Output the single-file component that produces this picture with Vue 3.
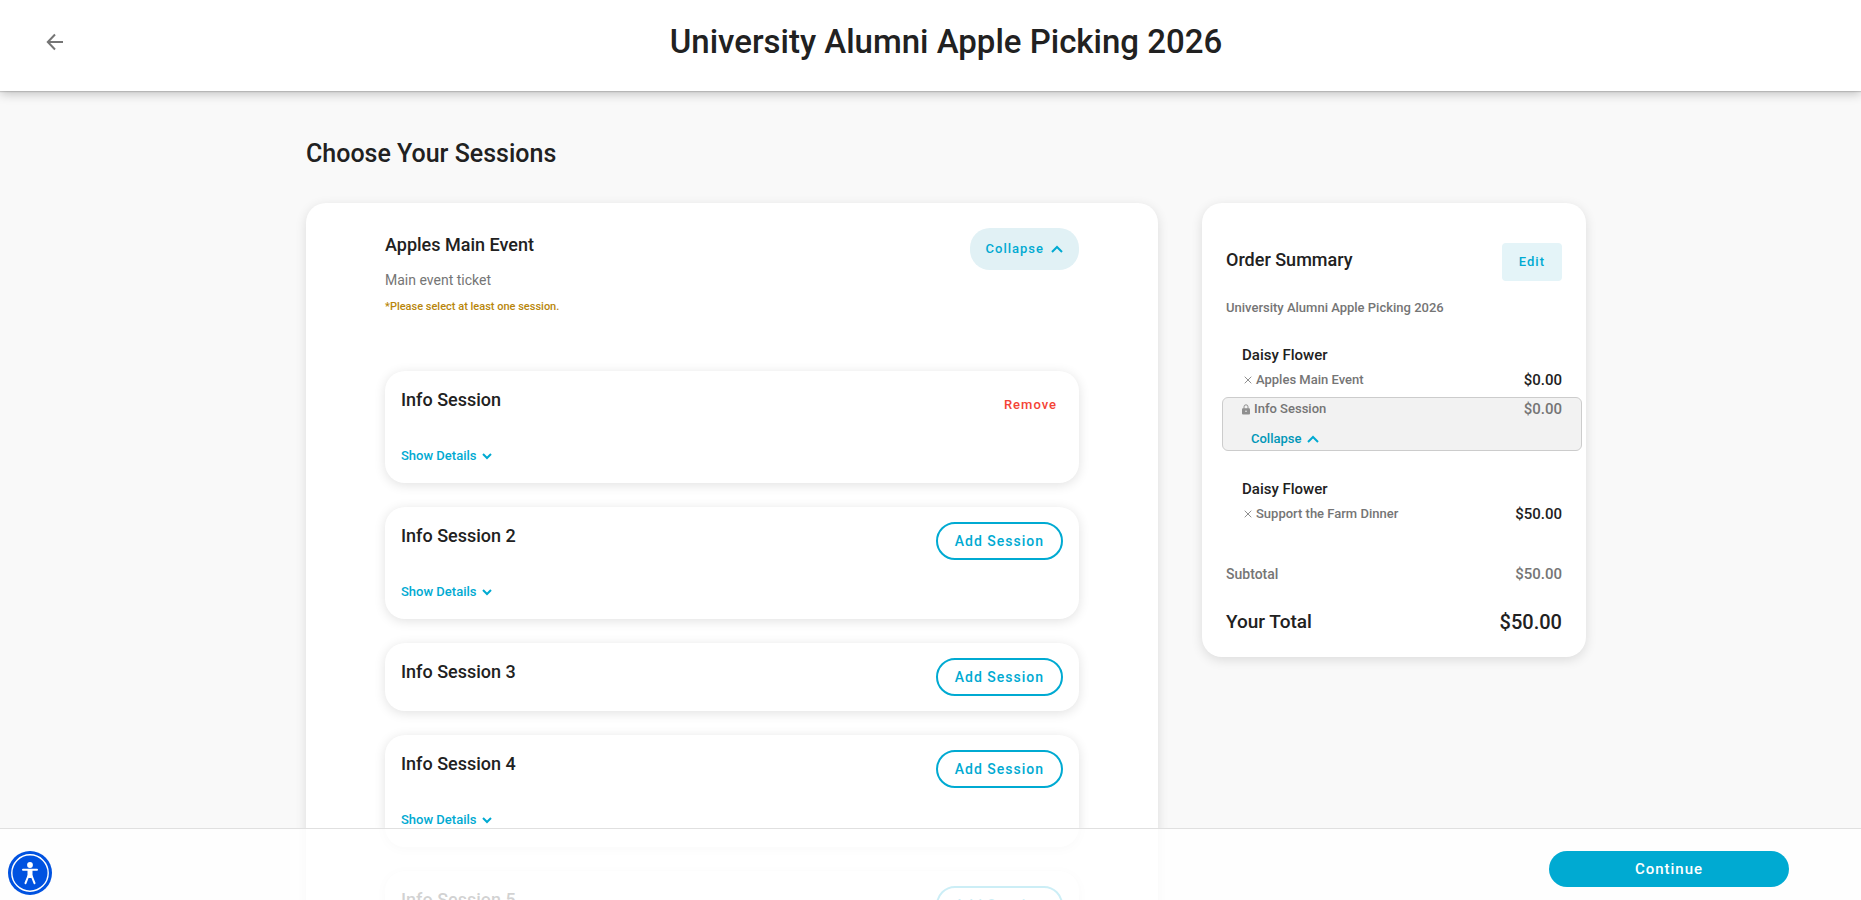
<script setup>
import { reactive } from 'vue'

const sessions = reactive([
  { id: 1, name: 'Info Session', details: true, added: true },
  { id: 2, name: 'Info Session 2', details: true, added: false },
  { id: 3, name: 'Info Session 3', details: false, added: false },
  { id: 4, name: 'Info Session 4', details: true, added: false },
  { id: 5, name: 'Info Session 5', details: true, added: false },
])
</script>

<template>
  <div class="page">
    <header class="topbar">
      <button class="back" type="button" aria-label="Back">
        <svg width="24" height="24" viewBox="0 0 24 24" aria-hidden="true">
          <path d="M20 12H5M12 4.5L4.8 12l7.2 7.5" fill="none" stroke="#757575" stroke-width="2" />
        </svg>
      </button>
      <h1>University Alumni Apple Picking 2026</h1>
    </header>

    <main class="content">
      <div class="container">
        <h2>Choose Your Sessions</h2>
        <div class="columns">
          <section class="card event">
            <div class="event-head">
              <div>
                <h3>Apples Main Event</h3>
                <p class="description">Main event ticket</p>
                <p class="notice">*Please select at least one session.</p>
              </div>
              <button class="collapse" type="button">
                Collapse
                <svg width="12" height="8" viewBox="0 0 12 8" aria-hidden="true">
                  <path d="M1 7l5-5 5 5" />
                </svg>
              </button>
            </div>

            <ul class="sessions">
              <li v-for="s in sessions" :key="s.id" class="session">
                <div class="session-head">
                  <h4>{{ s.name }}</h4>
                  <button v-if="s.added" class="remove" type="button" @click="s.added = false">Remove</button>
                  <button v-else class="add" type="button" @click="s.added = true">Add Session</button>
                </div>
                <button v-if="s.details" class="details" type="button">
                  Show Details
                  <svg width="10" height="8" viewBox="0 0 10 8" aria-hidden="true">
                    <path d="M1 2l4 4 4-4" />
                  </svg>
                </button>
              </li>
            </ul>
          </section>

          <aside class="card summary">
            <div class="summary-head">
              <h3>Order Summary</h3>
              <button class="edit" type="button">Edit</button>
            </div>
            <p class="event-name">University Alumni Apple Picking 2026</p>

            <div class="guest">
              <h4>Daisy Flower</h4>
              <div class="line">
                <button class="drop" type="button" aria-label="Remove Apples Main Event">
                  <svg width="8" height="8" viewBox="0 0 8 8" aria-hidden="true"><path d="M.7.7l6.6 6.6M7.3.7L.7 7.3" /></svg>
                </button>
                <span>Apples Main Event</span>
                <span class="price">$0.00</span>
              </div>
              <div class="locked">
                <div class="line">
                  <svg class="lock" width="8" height="11" viewBox="0 0 8 11" aria-hidden="true">
                    <path d="M2 5V2.800a2 2 0 0 1 4 0V5" fill="none" stroke="#8f8f8f" />
                    <rect y="4.200" width="8" height="6.200" rx="1" fill="#8f8f8f" />
                    <circle cx="4" cy="7.300" r=".8" fill="#f2f2f2" />
                  </svg>
                  <span>Info Session</span>
                  <span class="price">$0.00</span>
                </div>
                <button class="collapse-link" type="button">
                  Collapse
                  <svg width="12" height="8" viewBox="0 0 12 8" aria-hidden="true">
                    <path d="M1 7l5-5 5 5" />
                  </svg>
                </button>
              </div>
            </div>

            <div class="guest">
              <h4>Daisy Flower</h4>
              <div class="line">
                <button class="drop" type="button" aria-label="Remove Support the Farm Dinner">
                  <svg width="8" height="8" viewBox="0 0 8 8" aria-hidden="true"><path d="M.7.7l6.6 6.6M7.3.7L.7 7.3" /></svg>
                </button>
                <span>Support the Farm Dinner</span>
                <span class="price">$50.00</span>
              </div>
            </div>

            <div class="subtotal"><span>Subtotal</span><span class="amount">$50.00</span></div>
            <div class="total"><span>Your Total</span><span class="amount">$50.00</span></div>
          </aside>
        </div>
      </div>
    </main>

    <footer class="bottombar">
      <button class="a11y" type="button" aria-label="Accessibility menu">
        <svg width="44" height="44" viewBox="0 0 44 44" aria-hidden="true">
          <circle cx="22" cy="22" r="22" fill="#0052e0" />
          <circle cx="22" cy="22" r="18.200" fill="none" stroke="#fff" stroke-width="1.400" />
          <circle cx="22" cy="14" r="2.900" fill="#fff" />
          <path d="M15 18.800l14 0M20.300 25l-2.800 7.200M23.700 25l2.800 7.200" fill="none" stroke="#fff" stroke-width="2" stroke-linecap="round" />
          <path d="M19.500 18.500h5v7.500l-1 1h-3l-1-1z" fill="#fff" />
        </svg>
      </button>
      <button class="continue" type="button">Continue</button>
    </footer>
  </div>
</template>

<style>
body {
  margin: 0;
  background: #f9f9f9;
}
</style>

<style scoped>
.page {
  display: flex;
  flex-direction: column;
  height: 100vh;
  overflow: hidden;
  background: #f9f9f9;
  color: #212121;
  font-family: Roboto, "Liberation Sans", sans-serif;
  font-weight: 500;
}
h1, h2, h3, h4, p, ul {
  margin: 0;
  padding: 0;
  font-weight: 500;
}
button {
  border: 0;
  padding: 0;
  background: none;
  color: #00aad2;
  font: inherit;
  cursor: pointer;
}
svg {
  display: block;
  flex: none;
}
.topbar {
  display: grid;
  grid-template-columns: 48px 1fr 48px;
  align-items: center;
  padding: 18px 0 25px 31px;
  background: #fff;
  box-shadow: 0 1px 1px rgba(0, 0, 0, 0.14), 0 3px 10px rgba(0, 0, 0, 0.22);
  z-index: 1;
}
.back {
  display: flex;
  justify-content: center;
}
h1 {
  font-size: 33px;
  line-height: 48px;
  text-align: center;
}
.content {
  flex: 1;
  min-height: 0;
  overflow-y: auto;
  scrollbar-width: none;
  padding-left: 31px;
}
.container {
  max-width: 1280px;
  margin: 0 auto;
  padding: 46px 0 120px;
}
h2 {
  font-size: 25px;
  line-height: 34px;
  margin-bottom: 32px;
}
.columns {
  display: grid;
  grid-template-columns: minmax(0, 1fr) 384px;
  gap: 44px;
  align-items: start;
}
.card {
  border-radius: 20px;
  background: #fff;
  box-shadow: 0 3px 12px rgba(0, 0, 0, 0.12);
}
.event {
  padding: 25px 79px 40px;
}
.event-head {
  display: flex;
  justify-content: space-between;
  align-items: flex-start;
  margin-bottom: 55px;
}
h3 {
  font-size: 18px;
  line-height: 34px;
}
.description {
  color: #757575;
  font-size: 14px;
  font-weight: 400;
  line-height: 36px;
}
.notice {
  color: #b8860b;
  font-size: 11px;
  line-height: 18px;
}
.collapse {
  display: flex;
  align-items: center;
  gap: 7px;
  padding: 0 16px;
  border-radius: 20px;
  background: #e1f1f5;
  font-size: 13px;
  line-height: 42px;
  letter-spacing: 1px;
}
.collapse path,
.collapse-link path,
.details path {
  fill: none;
  stroke: #00aad2;
  stroke-width: 2;
}
.sessions {
  display: grid;
  gap: 24px;
  list-style: none;
}
.session {
  padding: 15px 16px;
  border-radius: 20px;
  background: #fff;
  box-shadow: 0 2px 12px rgba(0, 0, 0, 0.12);
}
.session-head {
  display: flex;
  justify-content: space-between;
  align-items: flex-start;
}
h4 {
  font-size: 18px;
  line-height: 28px;
}
.add {
  padding: 0 17px;
  border: 2px solid #00aad2;
  border-radius: 19px;
  font-size: 14px;
  line-height: 34px;
  letter-spacing: 1px;
}
.remove {
  padding: 0 6px;
  color: #f44336;
  font-size: 13px;
  line-height: 38px;
  letter-spacing: 1px;
}
.details {
  display: flex;
  align-items: center;
  gap: 6px;
  margin-top: 20px;
  font-size: 13px;
  line-height: 24px;
}
.summary {
  padding: 40px 24px 20px;
  font-size: 14px;
}
.summary-head {
  display: flex;
  justify-content: space-between;
  align-items: flex-start;
}
.edit {
  padding: 0 17px;
  border-radius: 4px;
  background: #e4f4f8;
  font-size: 13px;
  line-height: 38px;
  letter-spacing: 1px;
}
.event-name {
  margin: 17px 0 25px;
  color: #757575;
  font-size: 13px;
  line-height: 20px;
}
.guest h4 {
  padding-left: 16px;
  font-size: 15px;
  line-height: 24px;
}
.guest + .guest {
  margin-top: 26px;
}
.line {
  display: flex;
  align-items: center;
  gap: 4px;
  padding-left: 18px;
  color: #757575;
  font-size: 13px;
  line-height: 26px;
}
.drop path {
  stroke: #8f8f8f;
}
.price {
  margin-left: auto;
  color: #212121;
  font-size: 15px;
}
.locked {
  margin: 4px -20px 0 -4px;
  border: 1px solid #ccc;
  border-radius: 6px;
  background: #f2f2f2;
}
.locked .line {
  padding: 0 19px;
  line-height: 22px;
}
.locked .price {
  color: #757575;
}
.collapse-link {
  display: flex;
  align-items: center;
  gap: 6px;
  margin: 7px 0 0 28px;
  color: #0097b8;
  font-size: 13px;
  line-height: 23px;
}
.subtotal,
.total {
  display: flex;
  justify-content: space-between;
}
.subtotal {
  margin-top: 35px;
  color: #757575;
  line-height: 24px;
}
.subtotal .amount {
  font-size: 15px;
}
.total {
  margin-top: 21px;
  font-size: 19px;
  line-height: 30px;
}
.total .amount {
  font-size: 20px;
}
.bottombar {
  position: fixed;
  right: 0;
  bottom: 0;
  left: 0;
  z-index: 2;
  display: flex;
  justify-content: space-between;
  align-items: flex-start;
  padding: 22px 72px 5px 8px;
  border-top: 1px solid #e0e0e0;
  background: rgba(255, 255, 255, 0.8);
}
.a11y {
  border-radius: 50%;
}
.continue {
  width: 240px;
  border-radius: 18px;
  background: #00aad2;
  color: #fff;
  font-size: 15px;
  line-height: 36px;
  letter-spacing: 1px;
}
</style>
